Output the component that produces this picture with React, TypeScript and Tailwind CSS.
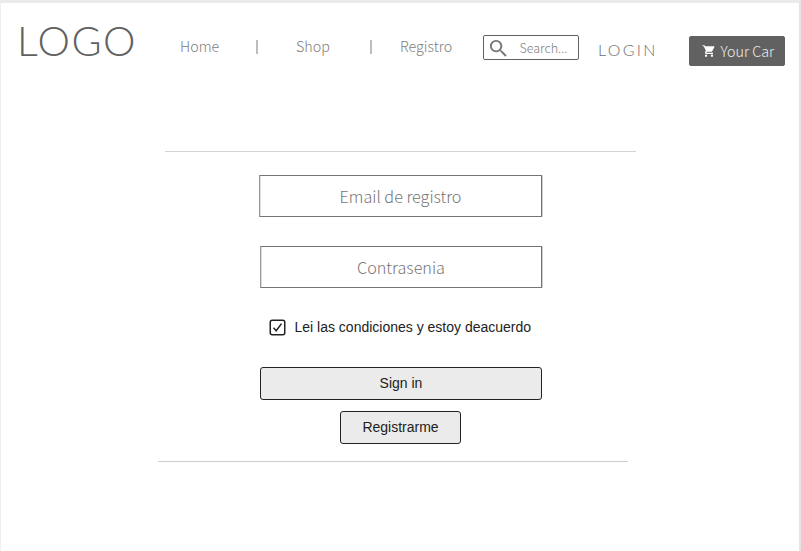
import type { ReactNode } from "react";

const sans = "font-['Noto_Sans_CJK_JP','Noto_Sans_CJK_SC',sans-serif] font-light whitespace-nowrap";
const lato = "font-['Lato',sans-serif] font-light whitespace-nowrap";
const arial = "font-['Liberation_Sans',Arial,sans-serif] text-sm text-[#222]";

function Field({ children, className }: { children: ReactNode; className: string }) {
  return (
    <div className={`${sans} ${className} flex h-[42px] items-center justify-center rounded-[1px] border border-[#757575] border-l-[#999] text-[16.2px] leading-6 text-[#757575] shadow-[1px_0_0_#ccc,inset_1px_0_0_#ddd]`}>
      {children}
    </div>
  );
}

function Separator() {
  return <span className="mt-[40px] h-[14px] w-[2px] bg-[#bdbdbd]" />;
}

export default function App() {
  return (
    <div className="h-[551px] w-[801px] overflow-hidden border-t-[3px] border-r-2 border-l border-t-[#ebebeb] border-r-[#e5e5e5] border-l-[#efefef] bg-white">
      <header className="-mt-[3px] flex h-[151px] items-start">
        <div className={`${lato} mt-[17px] ml-4 w-[163px] text-[41px] leading-[48px] tracking-[1.500px] text-[#616161]`}>LOGO</div>
        <nav className={`${sans} flex w-[303px] text-[14.300px] leading-5 text-[#808080]`}>
          <a className="mt-[36px] w-[76px]">Home</a>
          <Separator />
          <a className="mt-[36px] ml-[38px] w-[74px]">Shop</a>
          <Separator />
          <a className="mt-[36px] ml-[28px]">Registro</a>
        </nav>
        <div className="mt-[35px] flex h-[25px] w-[96px] items-center rounded-[2px] border border-[#616161]">
          <svg viewBox="0 0 24 24" className="ml-[2.500px] mt-px h-[23px] w-[23px] shrink-0" fill="#757575">
            <path d="M15.5 14h-.79l-.28-.27A6.47 6.47 0 0 0 16 9.5 6.5 6.5 0 1 0 9.500 16c1.610 0 3.090-.59 4.230-1.570l.27.28v.79l5 4.990L20.490 19l-4.990-5zm-6 0A4.500 4.500 0 1 1 14 9.500 4.500 4.500 0 0 1 9.500 14z" />
          </svg>
          <span className={`${sans} ml-[10px] text-[12.500px] leading-5 text-[#808080]`}>Search...</span>
        </div>
        <a className={`${lato} mt-[40px] ml-[19px] w-[91px] text-[16px] leading-5 tracking-[2.300px] text-[#707070]`}>LOGIN</a>
        <button className="mt-[36px] flex h-[30px] w-[96px] items-center rounded-[2px] border border-[#616161] bg-[#616161] text-[#eee]">
          <svg viewBox="0 0 24 24" className="ml-[12px] h-[14px] w-[14px] shrink-0" fill="#fff">
            <path d="M7 18a2 2 0 1 0 0 4 2 2 0 0 0 0-4zM1 2v2h2l3.600 7.590-1.350 2.450A2 2 0 0 0 7 17h12v-2H7.420l-.03-.12.900-1.630h7.450c.75 0 1.410-.41 1.750-1.030l3.580-6.490A1 1 0 0 0 20.200 4H5.210l-.94-2H1zm16 16a2 2 0 1 0 0 4 2 2 0 0 0 0-4z" />
          </svg>
          <span className={`${sans} ml-[4.500px] text-[14.300px] leading-5`}>Your Car</span>
        </button>
      </header>
      <main>
        <div className="ml-[164px] h-px w-[471px] bg-[#d3d3d3]" />
        <form className="ml-[258px] flex h-[309px] flex-col">
          <Field className="mt-[23px] w-[283px]">Email de registro</Field>
          <Field className="mt-[29px] ml-px w-[282px]">Contrasenia</Field>
          <label className={`${arial} mt-[29px] ml-[10px] flex h-5 items-center leading-5`}>
            <svg viewBox="0 0 17 17" className="mt-px h-[17px] w-[17px]" fill="none" stroke="#222">
              <rect x="1.250" y="1.250" width="14.500" height="14.500" rx="2" strokeWidth="1.500" />
              <path d="M4.500 8.700l2.700 3L12.500 4.600" strokeWidth="1.500" />
            </svg>
            <span className="ml-[8.500px]">Lei las condiciones y estoy deacuerdo</span>
          </label>
          <button type="button" className={`${arial} mt-[30px] ml-px h-[33px] w-[282px] rounded-[3px] border border-[#222] bg-[#ebebeb] pb-0.5`}>Sign in</button>
          <button type="button" className={`${arial} mt-[11px] ml-[81px] h-[33px] w-[121px] rounded-[3px] border border-[#222] bg-[#ebebeb] pb-0.5`}>Registrarme</button>
        </form>
        <div className="ml-[157px] h-px w-[470px] bg-[#cecece]" />
      </main>
    </div>
  );
}
